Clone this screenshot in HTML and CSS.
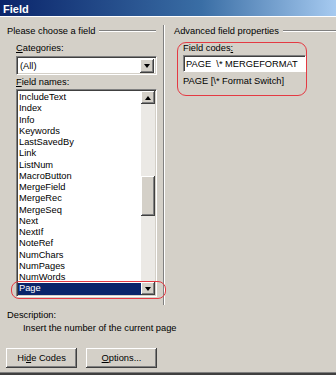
FILE: index.html
```html
<!DOCTYPE html>
<html lang="en">
	<head>
		<meta charset="UTF-8" />
		<title>Field</title>
		<link rel="stylesheet" href="styles.css">
	</head>
	<body>
		<div class="dialog">
			<div class="titlebar">Field</div>

			<div class="panes">
				<!-- left: field picker -->
				<div class="pane leftPane">
					<div class="legend"><span>Please choose a field</span><i class="rule"></i></div>
					<div class="label"><u>C</u>ategories:</div>
					<div class="combo">
						<span class="comboText">(All)</span>
						<span class="btn3d comboBtn"><b class="arrowDown"></b></span>
					</div>
					<div class="label labelNames"><u>F</u>ield names:</div>
					<div class="listBox">
						<div class="listItems">
							<div class="item">IncludeText</div>
							<div class="item">Index</div>
							<div class="item">Info</div>
							<div class="item">Keywords</div>
							<div class="item">LastSavedBy</div>
							<div class="item">Link</div>
							<div class="item">ListNum</div>
							<div class="item">MacroButton</div>
							<div class="item">MergeField</div>
							<div class="item">MergeRec</div>
							<div class="item">MergeSeq</div>
							<div class="item">Next</div>
							<div class="item">NextIf</div>
							<div class="item">NoteRef</div>
							<div class="item">NumChars</div>
							<div class="item">NumPages</div>
							<div class="item">NumWords</div>
							<div class="item selected">Page</div>
						</div>
						<div class="scrollBar">
							<span class="btn3d scrollBtn"><b class="arrowUp"></b></span>
							<div class="track"><span class="btn3d thumb"></span></div>
							<span class="btn3d scrollBtn"><b class="arrowDown"></b></span>
						</div>
					</div>
				</div>

				<!-- right: advanced properties -->
				<div class="pane rightPane">
					<div class="legend"><span>Advanced field properties</span><i class="rule"></i></div>
					<div class="label">Field codes<u>:</u></div>
					<div class="codeInput">PAGE&nbsp; \* MERGEFORMAT</div>
					<div class="syntax">PAGE [\* Format Switch]</div>
				</div>
			</div>

			<div class="description">
				<div>Description:</div>
				<div class="descText">Insert the number of the current page</div>
			</div>

			<div class="buttons">
				<span class="btn3d pushBtn">Hi<u>d</u>e Codes</span>
				<span class="btn3d pushBtn"><u>O</u>ptions...</span>
			</div>
		</div>

		<!-- red annotation marks drawn over the dialog -->
		<div class="mark markCodes"></div>
		<div class="mark markPage"></div>
	</body>
</html>
```

FILE: styles.css
```css
body {
	margin: 0;
	width: 336px;
	height: 375px;
	overflow: hidden;
	position: relative;
	background: #d4d0c8;
	font-family: "Liberation Sans", Arial, sans-serif;
	font-size: 9.3px;
	color: #000;
}

u {
	text-decoration: underline;
	text-underline-offset: 1px;
}

.dialog {
	height: 373px;
	border-bottom: 2px solid #404040;
	box-shadow: inset 0 -1px #808080;
}

.titlebar {
	height: 17px;
	line-height: 18px;
	padding-left: 3px;
	background: linear-gradient(to right, #0a246a, #3a6ea5 60%, #a6caf0);
	color: #fff;
	font-weight: bold;
	font-size: 11px;
	border-bottom: 1px solid #fff;
	box-sizing: border-box;
}

.panes {
	display: flex;
	margin-top: 8px;
	height: 280px;
}

.pane {
	box-sizing: border-box;
}

.leftPane {
	width: 165px;
	padding: 0 8px 0 16px;
	border-right: 1px solid #fff;
	box-shadow: inset -1px 0 #808080;
}

.rightPane {
	flex: 1;
	padding-left: 18px;
}

.legend {
	display: flex;
	align-items: center;
	height: 12px;
	margin-left: -9px;
	gap: 4px;
}

.leftPane .legend span {
	margin-left: 0;
}

.rightPane .legend {
	margin-left: -9px;
}

.rule {
	flex: 1;
	height: 1px;
	background: #808080;
	border-bottom: 1px solid #fff;
}

.label {
	height: 12px;
	line-height: 12px;
	margin-top: 5px;
}

.labelNames {
	margin-top: 1px;
}

.combo {
	display: flex;
	align-items: center;
	margin-top: 2px;
	height: 19px;
	width: 141px;
	box-sizing: border-box;
	background: #fff;
	border: 1px solid;
	border-color: #808080 #fff #fff #808080;
	box-shadow: inset 1px 1px #404040, inset -1px -1px #d4d0c8;
	padding: 0 2px 0 3px;
}

.comboText {
	flex: 1;
}

.btn3d {
	display: flex;
	align-items: center;
	justify-content: center;
	box-sizing: border-box;
	background: #d4d0c8;
	box-shadow: inset -1px -1px #404040, inset 1px 1px #fff, inset -2px -2px #808080;
}

.comboBtn {
	width: 14px;
	height: 14px;
}

.arrowDown,
.arrowUp {
	width: 0;
	height: 0;
	border-left: 3.5px solid transparent;
	border-right: 3.5px solid transparent;
}

.arrowDown {
	border-top: 4px solid #000;
}

.arrowUp {
	border-bottom: 4px solid #000;
}

.listBox {
	display: flex;
	margin-top: 1px;
	width: 141px;
	height: 208px;
	box-sizing: border-box;
	background: #fff;
	border: 1px solid;
	border-color: #808080 #fff #fff #808080;
	box-shadow: inset 1px 1px #404040, inset -1px -1px #d4d0c8;
	padding: 1px;
}

.listItems {
	flex: 1;
	padding-top: 1px;
	overflow: hidden;
}

.item {
	height: 11.25px;
	line-height: 11.25px;
	padding-left: 1px;
	white-space: nowrap;
}

.item.selected {
	background: #0a246a;
	color: #fff;
}

.scrollBar {
	display: flex;
	flex-direction: column;
	width: 14px;
}

.scrollBtn {
	height: 13px;
}

.track {
	flex: 1;
	background: #ebe9e5;
	padding-top: 72px;
}

.thumb {
	height: 40px;
}

.codeInput {
	margin-top: 1px;
	width: 123px;
	height: 17px;
	line-height: 16px;
	box-sizing: border-box;
	background: #fff;
	border: 1px solid;
	border-color: #808080 #fff #fff #808080;
	box-shadow: inset 1px 1px #404040;
	padding-left: 2px;
	white-space: nowrap;
	overflow: hidden;
}

.syntax {
	margin-top: 3px;
	height: 12px;
	line-height: 12px;
}

.description {
	padding: 4px 0 0 7px;
	line-height: 12px;
}

.descText {
	margin-top: 1px;
	padding-left: 16px;
	white-space: nowrap;
}

.buttons {
	display: flex;
	gap: 9px;
	margin-top: 14px;
	padding-left: 6px;
}

.pushBtn {
	width: 71px;
	height: 20px;
}

.mark {
	position: absolute;
	border: 1.5px solid #e43a43;
	border-radius: 9px;
	box-sizing: border-box;
}

.markCodes {
	left: 177px;
	top: 42px;
	width: 130px;
	height: 54px;
}

.markPage {
	left: 11px;
	top: 281px;
	width: 155px;
	height: 18px;
	border-radius: 8px;
}
```
